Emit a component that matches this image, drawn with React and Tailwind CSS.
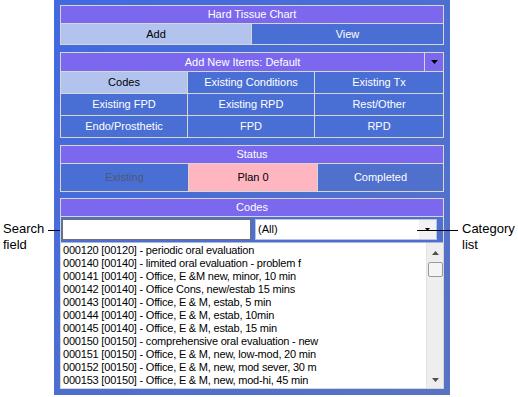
import React from 'react';

const CODES = [
    '000120 [00120] - periodic oral evaluation',
    '000140 [00140] - limited oral evaluation - problem f',
    '000141 [00140] - Office, E &M new, minor, 10 min',
    '000142 [00140] - Office Cons, new/estab 15 mins',
    '000143 [00140] - Office, E & M, estab, 5 min',
    '000144 [00140] - Office, E & M, estab, 10min',
    '000145 [00140] - Office, E & M, estab, 15 min',
    '000150 [00150] - comprehensive oral evaluation - new',
    '000151 [00150] - Office, E & M, new, low-mod, 20 min',
    '000152 [00150] - Office, E & M, new, mod sever, 30 m',
    '000153 [00150] - Office, E & M, new, mod-hi, 45 min',
];

const ITEM_TABS = [
    ['Codes', true],
    ['Existing Conditions'],
    ['Existing Tx'],
    ['Existing FPD'],
    ['Existing RPD'],
    ['Rest/Other'],
    ['Endo/Prosthetic'],
    ['FPD'],
    ['RPD'],
];

function Header({ children }) {
    return (
        <div className="h-[18px] bg-[#7b68ee] text-white flex items-center justify-center border-b border-[#d6d6d6]">
            {children}
        </div>
    );
}

function Cell({ label, active }) {
    return (
        <div className={`h-[21px] flex items-center justify-center ${active ? 'bg-[#b2c3ee] text-black' : 'bg-[#4a6fd4] text-white'}`}>
            {label}
        </div>
    );
}

export default function App() {
    return (
        <div className="relative w-[518px] h-[397px] bg-white overflow-hidden font-['Liberation_Sans',Arial,sans-serif] text-[11px]">
            <div className="ml-[54px] w-[396px] h-[395px] bg-gradient-to-br from-[#4169e1] to-[#5873c2] px-[6px] pt-[5px] flex flex-col">
                {/* Hard Tissue Chart */}
                <div className="border border-[#d6d6d6]">
                    <Header>Hard Tissue Chart</Header>
                    <div className="grid grid-cols-[191px_1fr] h-[20px]">
                        <div className="bg-[#b2c3ee] text-black flex items-center justify-center border-r border-[#d6d6d6]">Add</div>
                        <div className="bg-[#4a6fd4] text-white flex items-center justify-center">View</div>
                    </div>
                </div>

                {/* Add New Items */}
                <div className="border border-[#d6d6d6] mt-[7px]">
                    <div className="flex h-[19px] border-b border-[#d6d6d6] bg-[#7b68ee] text-white">
                        <div className="flex-1 flex items-center justify-center">Add New Items: Default</div>
                        <div className="w-[19px] border-l border-[#d6d6d6] flex items-center justify-center">
                            <svg width="7" height="4" viewBox="0 0 7 4"><path d="M0 0h7L3.5 4z" fill="#000" /></svg>
                        </div>
                    </div>
                    <div className="grid grid-cols-[126px_126px_1fr] gap-px bg-[#d6d6d6]">
                        {ITEM_TABS.map(([label, active]) => (
                            <Cell key={label} label={label} active={active} />
                        ))}
                    </div>
                </div>

                {/* Status */}
                <div className="border border-[#d6d6d6] mt-[7px]">
                    <Header>Status</Header>
                    <div className="grid grid-cols-[127px_128px_1fr] gap-px bg-[#d6d6d6] h-[27px]">
                        <div className="bg-[#4a6fd4] text-[#4c5878] flex items-center justify-center">Existing</div>
                        <div className="bg-[#ffb6c1] text-black flex items-center justify-center">Plan 0</div>
                        <div className="bg-[#4f70cc] text-white flex items-center justify-center">Completed</div>
                    </div>
                </div>

                {/* Codes */}
                <div className="border border-[#d6d6d6] mt-[6px] flex-1 mb-[6px] flex flex-col">
                    <Header>Codes</Header>
                    <div className="flex items-center gap-[4px] px-[1px] h-[25px] bg-[#4e6fcf]">
                        <div className="w-[189px] h-[21px] bg-white border border-[#707070]" />
                        <div className="flex-1 h-[21px] bg-white border border-[#b8c4de] flex items-center pl-[2px]">
                            <span className="flex-1">(All)</span>
                            <div className="w-[17px] h-full bg-[#f2f2f2] flex items-center justify-center">
                                <svg width="5" height="3" viewBox="0 0 5 3"><path d="M0 0h5L2.5 3z" fill="#000" /></svg>
                            </div>
                        </div>
                        <div className="w-[1px]" />
                    </div>
                    <div className="flex-1 bg-white flex border-t border-[#a9b6d8]">
                        <div className="flex-1 pl-[2px] pt-[1px] leading-[13px] tracking-[-0.2px] text-black whitespace-nowrap overflow-hidden">
                            {CODES.map(c => (
                                <div key={c}>{c}</div>
                            ))}
                        </div>
                        <div className="w-[17px] bg-[#eeeeee] flex flex-col items-center border-l border-[#e2e2e2]">
                            <div className="h-[19px] flex items-center justify-center">
                                <svg width="7" height="4" viewBox="0 0 7 4"><path d="M0 4h7L3.5 0z" fill="#505050" /></svg>
                            </div>
                            <div className="w-[15px] h-[15px] bg-[#f4f4f4] border border-[#9a9a9a] rounded-[2px]" />
                            <div className="flex-1" />
                            <div className="h-[17px] flex items-center justify-center">
                                <svg width="7" height="4" viewBox="0 0 7 4"><path d="M0 0h7L3.5 4z" fill="#505050" /></svg>
                            </div>
                        </div>
                    </div>
                </div>
            </div>

            {/* callouts */}
            <div className="absolute left-[3px] top-[221px] text-[13px] leading-[16px] text-black">
                <div>Search</div>
                <div>field</div>
            </div>
            <div className="absolute left-[48px] top-[230px] w-[12px] h-px bg-black" />
            <div className="absolute left-[417px] top-[230px] w-[41px] h-px bg-black" />
            <div className="absolute left-[462px] top-[221px] text-[13px] leading-[16px] text-black">
                <div>Category</div>
                <div>list</div>
            </div>
        </div>
    );
}
